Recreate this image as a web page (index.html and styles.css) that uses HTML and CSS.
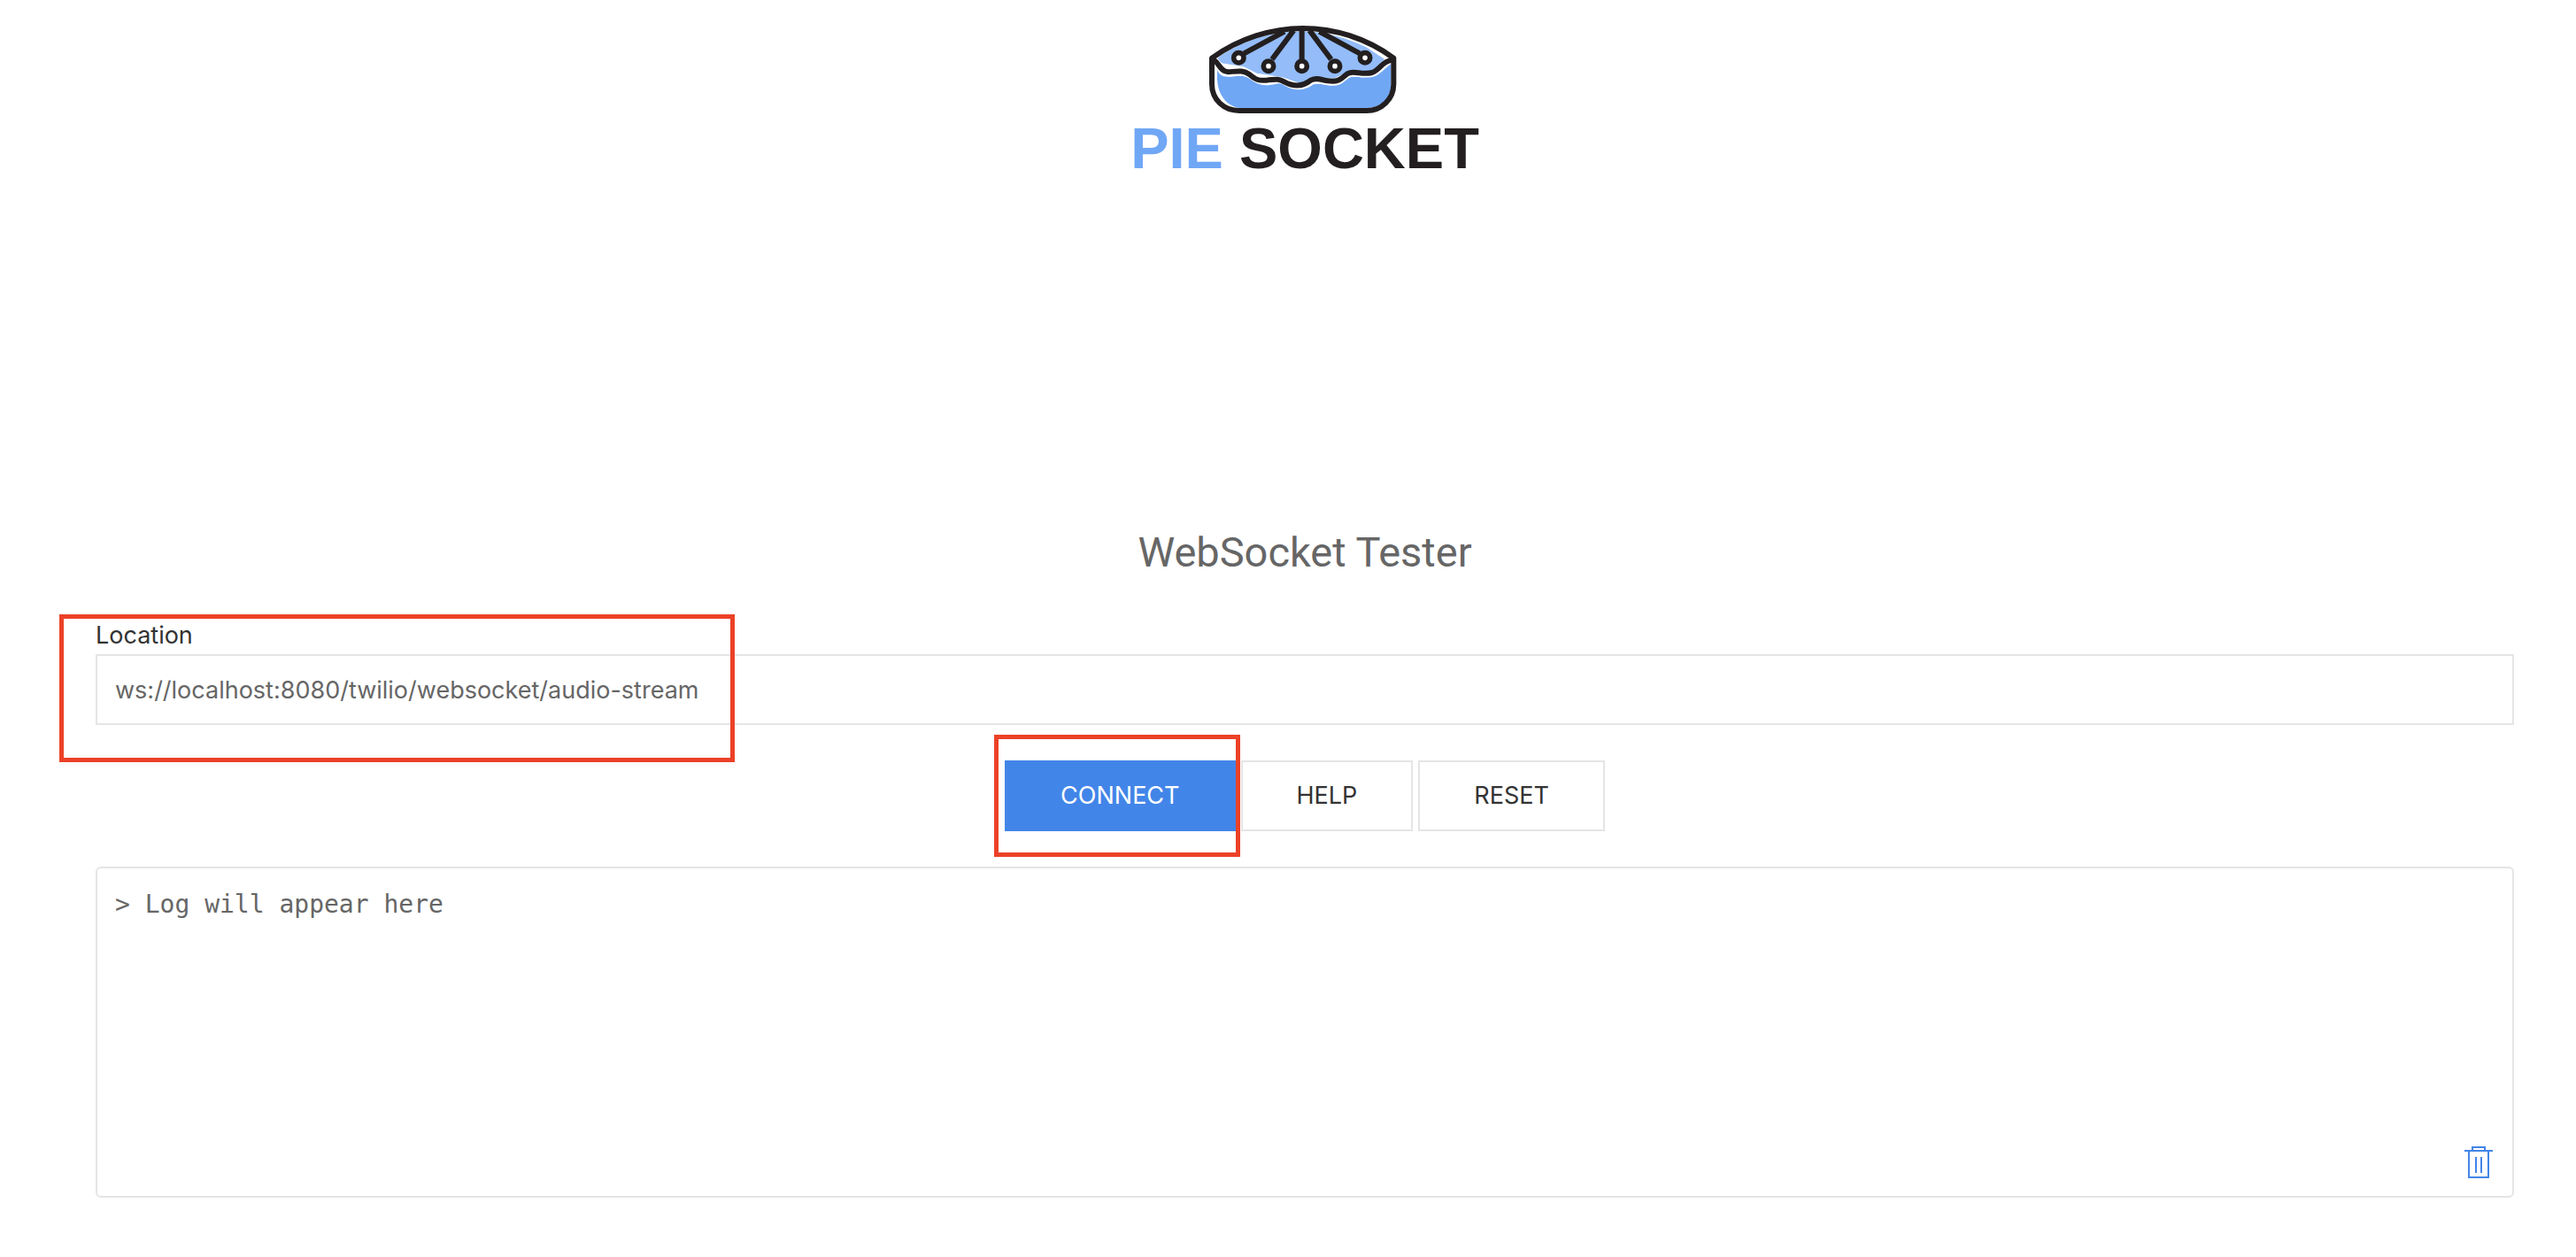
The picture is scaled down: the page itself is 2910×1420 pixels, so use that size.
FILE: index.html
```html
<!DOCTYPE html>
<html lang="en">
<head>
<meta charset="utf-8">
<meta name="viewport" content="width=device-width, initial-scale=1">
<title>WebSocket Tester - PieSocket</title>
<link rel="stylesheet" href="styles.css">
</head>
<body>
<div class="page">
  <header class="header">
    <a class="brand" href="#">
      <svg class="brand-mark" viewBox="12 0 720 360" aria-hidden="true">
        <path fill="#93bcf9" d="M76 137C150 84 250 46 365 46c70 0 150 22 215 54l62 40-34 42-78-4-60 28-60-6-55 22-58-20-88-14-44-22-75-12z"/>
        <path fill="#70a7f5" d="M75 178c10 18 20 24 45 22 35-3 50-8 75 12 25 18 45 20 80 12 30-6 40 14 75 14 38 0 40-24 75-22 30 4 60 8 80-6 20-16 22-16 55-8 50 4 60-8 80-26l24-20v70c0 50-36 80-82 80H150c-48-8-73-50-75-98z"/>
        <path class="mark-gap" d="M70 154c18 18 20 38 52 38 25 0 45-7 67 9 18 16 30 19 55 18 30-2 40-10 63 5 35 20 65 15 90-4 18-8 38 0 60 3 42 5 45-21 70-29 25-4 50 8 78-6"/>
        <path class="mark-line" d="M57 137v88c0 53 41 90 93 90h432c50 0 91-39 91-90v-88C580 68 470 36 365 36S150 70 57 137z"/>
        <path class="mark-line" d="M62 142c22 14 23 40 50 42 30-2 50-8 72 8 20 17 30 22 58 20 28-2 38-8 60 5 35 19 63 17 90-5 20-10 34-2 58 2 45 7 50-16 70-26 22-10 45 7 80-2 28-10 36-42 73-43"/>
        <path class="mark-line" d="M303 47L166 121M334 43l-73 98M362 40v101M388 43l73 98M421 47l137 74"/>
        <g class="mark-node">
          <circle cx="148" cy="136" r="17"/><circle cx="249" cy="164" r="17"/><circle cx="362" cy="164" r="17"/><circle cx="474" cy="164" r="17"/><circle cx="576" cy="136" r="17"/>
        </g>
      </svg>
      <span class="brand-name"><span class="brand-accent">PIE</span> SOCKET</span>
    </a>
  </header>
  <main>
    <h1 class="title">WebSocket Tester</h1>
    <form class="tester">
      <div class="field">
        <label class="label" for="location">Location</label>
        <input class="input" id="location" type="text" value="ws://localhost:8080/twilio/websocket/audio-stream">
        <span class="highlight highlight-field"></span>
      </div>
      <div class="actions">
        <div class="action">
          <button class="button button-primary" type="button">CONNECT</button>
          <span class="highlight highlight-action"></span>
        </div>
        <button class="button" type="button">HELP</button>
        <button class="button" type="reset">RESET</button>
      </div>
    </form>
    <section class="log" aria-label="Log">
      <pre class="log-text">&gt; Log will appear here</pre>
      <button class="clear" type="button" aria-label="Clear log">
        <svg class="icon" viewBox="0 0 20 20" aria-hidden="true">
          <path fill="none" stroke="currentColor" d="M6.5 3V1.5h7V3M4.5 4v14.500h11V4"/>
          <path fill="currentColor" d="M8 7h1v9H8zM11 7h1v9h-1zM2 3h16v1H2z"/>
        </svg>
      </button>
    </section>
  </main>
</div>
</body>
</html>
```
FILE: styles.css
```css
* {
  box-sizing: border-box;
}

body {
  margin: 0;
  background: #fff;
  color: #333;
  font-family: Inter, "Liberation Sans", sans-serif;
  font-size: 27px;
  line-height: 42px;
}

.page {
  padding: 20px 70px 64px 108px;
}

.header {
  display: flex;
  justify-content: center;
  margin-bottom: 397px;
}

.brand {
  display: flex;
  flex-direction: column;
  align-items: center;
  color: #231f20;
  text-decoration: none;
}

.brand-mark {
  display: block;
  width: 240px;
  height: 120px;
}

.mark-line,
.mark-gap,
.mark-node {
  fill: none;
  stroke: #231f20;
  stroke-width: 18px;
  stroke-linejoin: round;
}

.mark-gap {
  stroke: #fff;
  stroke-width: 14px;
}

.mark-node {
  fill: #fff;
  stroke-width: 17px;
}

.brand-name {
  font-family: "Liberation Sans", sans-serif;
  font-size: 65px;
  font-weight: 700;
  line-height: 56px;
  white-space: nowrap;
}

.brand-accent {
  color: #70a7f5;
}

.title {
  margin: 0 0 42px;
  color: #666;
  font-family: Roboto, "Liberation Sans", sans-serif;
  font-size: 47px;
  font-weight: 400;
  line-height: 62px;
  text-align: center;
}

.field,
.action {
  position: relative;
}

.label {
  display: block;
}

.input {
  display: block;
  width: 100%;
  height: 80px;
  padding: 0 20px;
  border: 2px solid #e5e5e5;
  border-radius: 0;
  background: #fff;
  color: #666;
  font: inherit;
}

.actions {
  display: flex;
  justify-content: center;
  gap: 6px;
  margin: 40px 0;
}

.button {
  padding: 0 61px;
  border: 2px solid #e5e5e5;
  background: #fff;
  color: #333;
  font: inherit;
  line-height: 76px;
}

.button-primary {
  border-color: #4285e8;
  background: #4285e8;
  color: #fff;
}

.highlight {
  position: absolute;
  border: 5px solid #ec4127;
  pointer-events: none;
}

.highlight-field {
  top: -3px;
  bottom: -42px;
  left: -41px;
  width: 763px;
}

.highlight-action {
  top: -29px;
  right: -5px;
  bottom: -29px;
  left: -12px;
}

.log {
  position: relative;
  min-height: 374px;
  padding: 20px;
  border: 2px solid #e5e5e5;
  border-radius: 6px;
  color: #666;
}

.log-text {
  margin: 0;
  font-family: "DejaVu Sans Mono", monospace;
  font-size: 28px;
}

.clear {
  position: absolute;
  right: 18px;
  bottom: 18px;
  padding: 0;
  border: 0;
  background: none;
  color: #4285e8;
}

.icon {
  display: block;
  width: 40px;
  height: 40px;
}
```
